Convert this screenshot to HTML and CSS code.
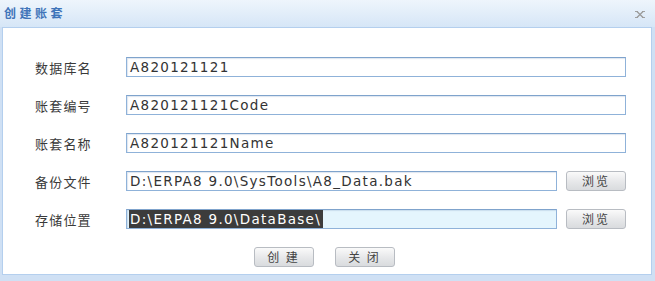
FILE: index.html
```html
<!DOCTYPE html>
<html lang="zh-CN">
<head>
  <meta charset="UTF-8">
  <title>创建账套</title>
  <link rel="stylesheet" href="styles.css">
</head>
<body>
  <div class="dialog">
    <div class="titlebar">
      <span class="title">创建账套</span>
      <span class="close">
        <svg width="12" height="9" viewBox="0 0 12 9">
          <path d="M1 1.5h3M8 1.5h3M1 7.5h3M8 7.5h3" stroke="#a0a0a0" stroke-width="1"/>
          <path d="M3 1.5L9 7.5M9 1.5L3 7.5" stroke="#9a9a9a" stroke-width="1.3"/>
        </svg>
      </span>
    </div>

    <div class="panel">
      <div class="form">
        <label>数据库名</label>
        <div class="field wide">A820121121</div>

        <label>账套编号</label>
        <div class="field wide">A820121121Code</div>

        <label>账套名称</label>
        <div class="field wide">A820121121Name</div>

        <label>备份文件</label>
        <div class="field-row">
          <div class="field">D:\ERPA8 9.0\SysTools\A8_Data.bak</div>
          <button class="btn">浏览</button>
        </div>

        <label>存储位置</label>
        <div class="field-row">
          <div class="field focus"><span class="sel">D:\ERPA8 9.0\DataBase\</span></div>
          <button class="btn">浏览</button>
        </div>
      </div>

      <div class="actions">
        <button class="btn">创 建</button>
        <button class="btn">关 闭</button>
      </div>
    </div>
  </div>
</body>
</html>
```

FILE: styles.css
```css
body {
  margin: 0;
  background: #cfe0f4;
  font-family: "Noto Sans CJK SC", "DejaVu Sans", sans-serif;
  width: 655px;
  height: 281px;
  overflow: hidden;
}

.dialog {
  height: 281px;
  display: flex;
  flex-direction: column;
}

.titlebar {
  height: 27px;
  display: flex;
  align-items: center;
  justify-content: space-between;
  padding: 0 8px 0 4px;
  background: linear-gradient(#eef5fc, #d6e6f7);
  box-sizing: border-box;
}

.title {
  font-size: 12px;
  font-weight: bold;
  letter-spacing: 3.5px;
  color: #3f74b9;
  line-height: 14px;
  margin-top: -2px;
}

.close {
  display: flex;
  margin-right: 1px;
  margin-top: 2px;
}

.panel {
  margin: 0 3px 6px 2px;
  background: #ffffff;
  border: 1px solid #b4cfee;
  flex: 1;
  padding: 29px 0 0 32px;
}

.form {
  display: grid;
  grid-template-columns: 91px 500px;
  row-gap: 18px;
  align-items: center;
}

label {
  font-size: 13px;
  letter-spacing: 1.2px;
  color: #3a3a3a;
}

.field {
  height: 20px;
  box-sizing: border-box;
  border: 1px solid #8fb2d9;
  border-top-color: #7fa3cc;
  box-shadow: inset 1px 1px 1px rgba(120, 150, 190, 0.25);
  font-family: "DejaVu Sans", sans-serif;
  font-size: 13.5px;
  letter-spacing: 1.3px;
  color: #333;
  padding: 0 3px;
  line-height: 18px;
  white-space: nowrap;
  overflow: hidden;
}

.field-row {
  display: flex;
  gap: 9px;
}

.field-row .field {
  width: 431px;
}

.field.focus {
  background: #e4f5fd;
  padding-left: 2px;
}

.sel {
  background: #3c3c3c;
  color: #ffffff;
  display: inline-block;
  padding: 0 2px 0 1px;
  line-height: 18px;
}

.btn {
  width: 60px;
  height: 20px;
  padding: 0;
  border: 1px solid #b8bcc2;
  border-radius: 3px;
  background: linear-gradient(#fafafa, #e6e7e9 55%, #d9dbde);
  font-family: "Noto Sans CJK SC", sans-serif;
  font-size: 12px;
  letter-spacing: 2px;
  color: #444;
  line-height: 18px;
}

.actions {
  display: flex;
  justify-content: center;
  gap: 21px;
  margin-top: 18px;
  padding-right: 38px;
}
```
